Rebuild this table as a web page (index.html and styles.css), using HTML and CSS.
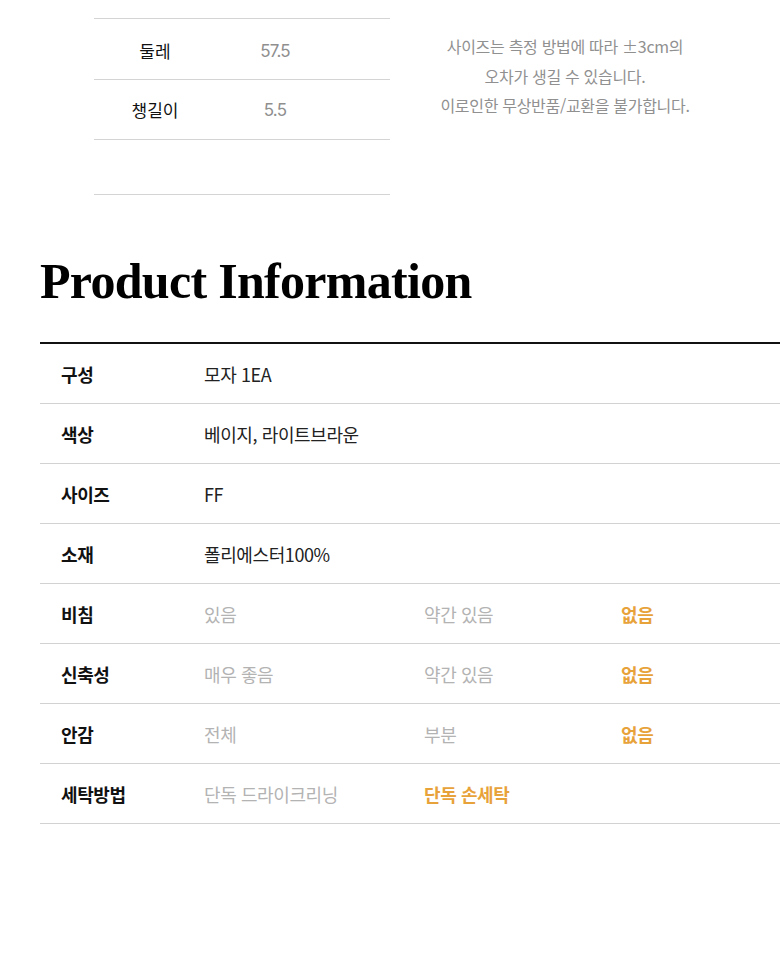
FILE: index.html
```html
<!DOCTYPE html>
<html lang="ko">
<head>
<meta charset="utf-8">
<link rel="stylesheet" href="styles.css">
</head>
<body>
<section class="size">
  <div class="size-table">
    <div class="size-row"><span class="s-label">둘레</span><span class="s-val">57.5</span></div>
    <div class="size-row"><span class="s-label">챙길이</span><span class="s-val">5.5</span></div>
    <div class="size-row empty"></div>
  </div>
  <p class="note">사이즈는 측정 방법에 따라 ±3cm의<br>오차가 생길 수 있습니다.<br>이로인한 무상반품/교환을 불가합니다.</p>
</section>

<h1 class="title">Product Information</h1>

<div class="info">
  <div class="row"><span class="label">구성</span><span class="val dark">모자 1EA</span></div>
  <div class="row"><span class="label">색상</span><span class="val dark">베이지, 라이트브라운</span></div>
  <div class="row"><span class="label">사이즈</span><span class="val dark">FF</span></div>
  <div class="row"><span class="label">소재</span><span class="val dark">폴리에스터100%</span></div>
  <div class="row"><span class="label">비침</span><span class="val">있음</span><span class="val">약간 있음</span><span class="val on">없음</span></div>
  <div class="row"><span class="label">신축성</span><span class="val">매우 좋음</span><span class="val">약간 있음</span><span class="val on">없음</span></div>
  <div class="row"><span class="label">안감</span><span class="val">전체</span><span class="val">부분</span><span class="val on">없음</span></div>
  <div class="row"><span class="label">세탁방법</span><span class="val">단독 드라이크리닝</span><span class="val on">단독 손세탁</span></div>
</div>
</body>
</html>
```

FILE: styles.css
```css
* { box-sizing: border-box; }
html, body { margin: 0; padding: 0; background: #fff; }
body {
  width: 780px;
  overflow: hidden;
  font-family: "Noto Sans CJK KR", "Noto Sans", sans-serif;
  color: #111;
}
.size {
  display: flex;
  padding-top: 18px;
  padding-left: 94px;
}
.size-table {
  width: 296px;
  border-top: 1px solid #d4d4d4;
}
.size-row {
  display: grid;
  grid-template-columns: 122px 118px 1fr;
  align-items: center;
  height: 60px;
  border-bottom: 1px solid #d4d4d4;
  font-size: 17px;
}
.size-row:first-child { height: 61px; padding-top: 3px; }
.size-row.empty { height: 55px; }
.s-label { text-align: center; color: #111; }
.s-val { text-align: center; color: #8f8f8f; font-family: "Inter", "Noto Sans", sans-serif; font-size: 17px; letter-spacing: -0.8px; }
.note {
  width: 350px;
  margin: 14px 0 0 0;
  text-align: center;
  font-size: 16px;
  line-height: 29.5px;
  color: #909090;
  letter-spacing: -0.3px;
}
.title {
  margin: 56px 0 0 40px;
  font-family: "Liberation Serif", "Times New Roman", serif;
  font-weight: 700;
  font-size: 50px;
  line-height: 60px;
  letter-spacing: -0.7px;
  color: #000;
}
.info {
  margin: 31px 0 0 40px;
  width: 740px;
  border-top: 2px solid #111;
}
.row {
  display: grid;
  grid-template-columns: 164px 220px 197px 1fr;
  align-items: center;
  height: 60px;
  border-bottom: 1px solid #d2d2d2;
  font-size: 18px;
  letter-spacing: -0.4px;
}
.label { padding-left: 21px; font-weight: 700; color: #111; }
.val { color: #b3b3b3; }
.val.dark { color: #222; grid-column: 2 / 5; }
.val.on { color: #e8a23a; font-weight: 700; }
```
